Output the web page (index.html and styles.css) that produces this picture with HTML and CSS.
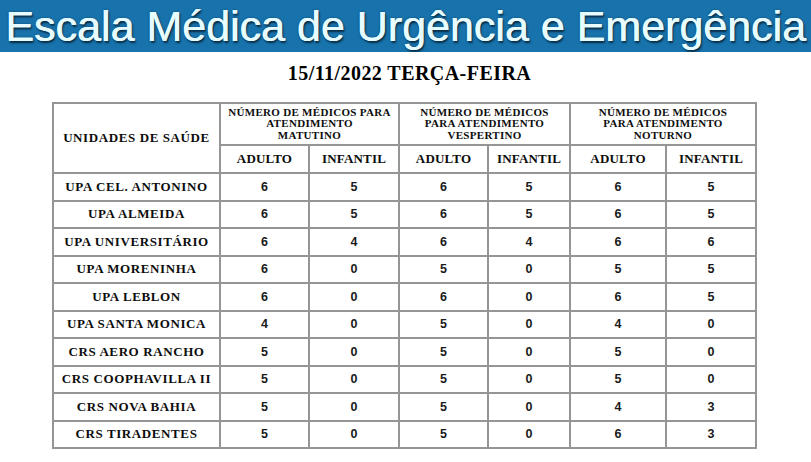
FILE: index.html
```html
<!DOCTYPE html>
<html lang="pt-BR">
<head>
<meta charset="utf-8">
<title>Escala Médica de Urgência e Emergência</title>
<link rel="stylesheet" href="styles.css">
</head>
<body>
<header class="banner"><h1 class="banner-title">Escala Médica de Urgência e Emergência</h1></header>
<h2 class="date">15/11/2022 TERÇA-FEIRA</h2>
<table class="escala">
  <colgroup>
    <col class="c-unit"><col class="c-a1"><col class="c-i1"><col class="c-a2"><col class="c-i2"><col class="c-a3"><col class="c-i3">
  </colgroup>
  <thead>
    <tr class="group-row">
      <th rowspan="2" class="unit-head">UNIDADES DE SAÚDE</th>
      <th colspan="2" class="group">NÚMERO DE MÉDICOS PARA<br>ATENDIMENTO<br>MATUTINO</th>
      <th colspan="2" class="group">NÚMERO DE MÉDICOS<br>PARA ATENDIMENTO<br>VESPERTINO</th>
      <th colspan="2" class="group">NÚMERO DE MÉDICOS<br>PARA ATENDIMENTO<br>NOTURNO</th>
    </tr>
    <tr class="sub-row">
      <th class="sub">ADULTO</th><th class="sub">INFANTIL</th>
      <th class="sub">ADULTO</th><th class="sub">INFANTIL</th>
      <th class="sub">ADULTO</th><th class="sub">INFANTIL</th>
    </tr>
  </thead>
  <tbody>
    <tr><th class="unit">UPA CEL. ANTONINO</th><td>6</td><td>5</td><td>6</td><td>5</td><td>6</td><td>5</td></tr>
    <tr><th class="unit">UPA ALMEIDA</th><td>6</td><td>5</td><td>6</td><td>5</td><td>6</td><td>5</td></tr>
    <tr><th class="unit">UPA UNIVERSITÁRIO</th><td>6</td><td>4</td><td>6</td><td>4</td><td>6</td><td>6</td></tr>
    <tr><th class="unit">UPA MORENINHA</th><td>6</td><td>0</td><td>5</td><td>0</td><td>5</td><td>5</td></tr>
    <tr><th class="unit">UPA LEBLON</th><td>6</td><td>0</td><td>6</td><td>0</td><td>6</td><td>5</td></tr>
    <tr><th class="unit">UPA SANTA MONICA</th><td>4</td><td>0</td><td>5</td><td>0</td><td>4</td><td>0</td></tr>
    <tr><th class="unit">CRS AERO RANCHO</th><td>5</td><td>0</td><td>5</td><td>0</td><td>5</td><td>0</td></tr>
    <tr><th class="unit">CRS COOPHAVILLA II</th><td>5</td><td>0</td><td>5</td><td>0</td><td>5</td><td>0</td></tr>
    <tr><th class="unit">CRS NOVA BAHIA</th><td>5</td><td>0</td><td>5</td><td>0</td><td>4</td><td>3</td></tr>
    <tr><th class="unit">CRS TIRADENTES</th><td>5</td><td>0</td><td>5</td><td>0</td><td>6</td><td>3</td></tr>
  </tbody>
</table>
</body>
</html>
```
FILE: styles.css
```css
html, body {
  margin: 0;
  padding: 0;
  background: #ffffff;
}

.banner {
  height: 52px;
  background: #1872ab;
  display: flex;
  align-items: center;
  justify-content: center;
  overflow: hidden;
}

.banner-title {
  margin: 0;
  font-family: "Liberation Sans", Arial, sans-serif;
  font-weight: normal;
  font-size: 43px;
  line-height: 52px;
  color: #e6fcff;
  white-space: nowrap;
  text-shadow: 0.6px 0 0 #e6fcff, 1.5px 1.5px 2px #082c44, 0 0 2px #0d4466;
}

.date {
  margin: 10px 0 0 0;
  text-align: center;
  font-family: "Liberation Serif", "Times New Roman", serif;
  font-weight: bold;
  font-size: 20px;
  letter-spacing: 0.45px;
  line-height: 23px;
  color: #000000;
  padding-left: 8px;
}

.escala {
  margin: 17px 0 0 52px;
  width: 703px;
  border-collapse: collapse;
  table-layout: fixed;
  font-family: "Liberation Serif", "Times New Roman", serif;
  color: #0d0d0d;
}

.c-unit { width: 167px; }
.c-a1 { width: 89px; }
.c-i1 { width: 90px; }
.c-a2 { width: 89px; }
.c-i2 { width: 82px; }
.c-a3 { width: 96px; }
.c-i3 { width: 90px; }

.escala th,
.escala td {
  border: 2px solid #959595;
  padding: 0;
  text-align: center;
  vertical-align: middle;
}

.group-row { height: 42px; }
.sub-row { height: 28px; }
.escala tbody tr { height: 27.5px; }

.group {
  font-size: 11px;
  line-height: 11.5px;
  letter-spacing: 0.3px;
  font-weight: bold;
  padding-top: 1px;
}

.unit-head,
.unit {
  font-size: 13px;
  letter-spacing: 0.6px;
  font-weight: bold;
  white-space: nowrap;
}

.sub {
  font-size: 13px;
  letter-spacing: 0.2px;
  font-weight: bold;
}

.escala td {
  font-family: "Liberation Sans", Arial, sans-serif;
  font-weight: bold;
  font-size: 12.5px;
  color: #1a1a1a;
}
```
